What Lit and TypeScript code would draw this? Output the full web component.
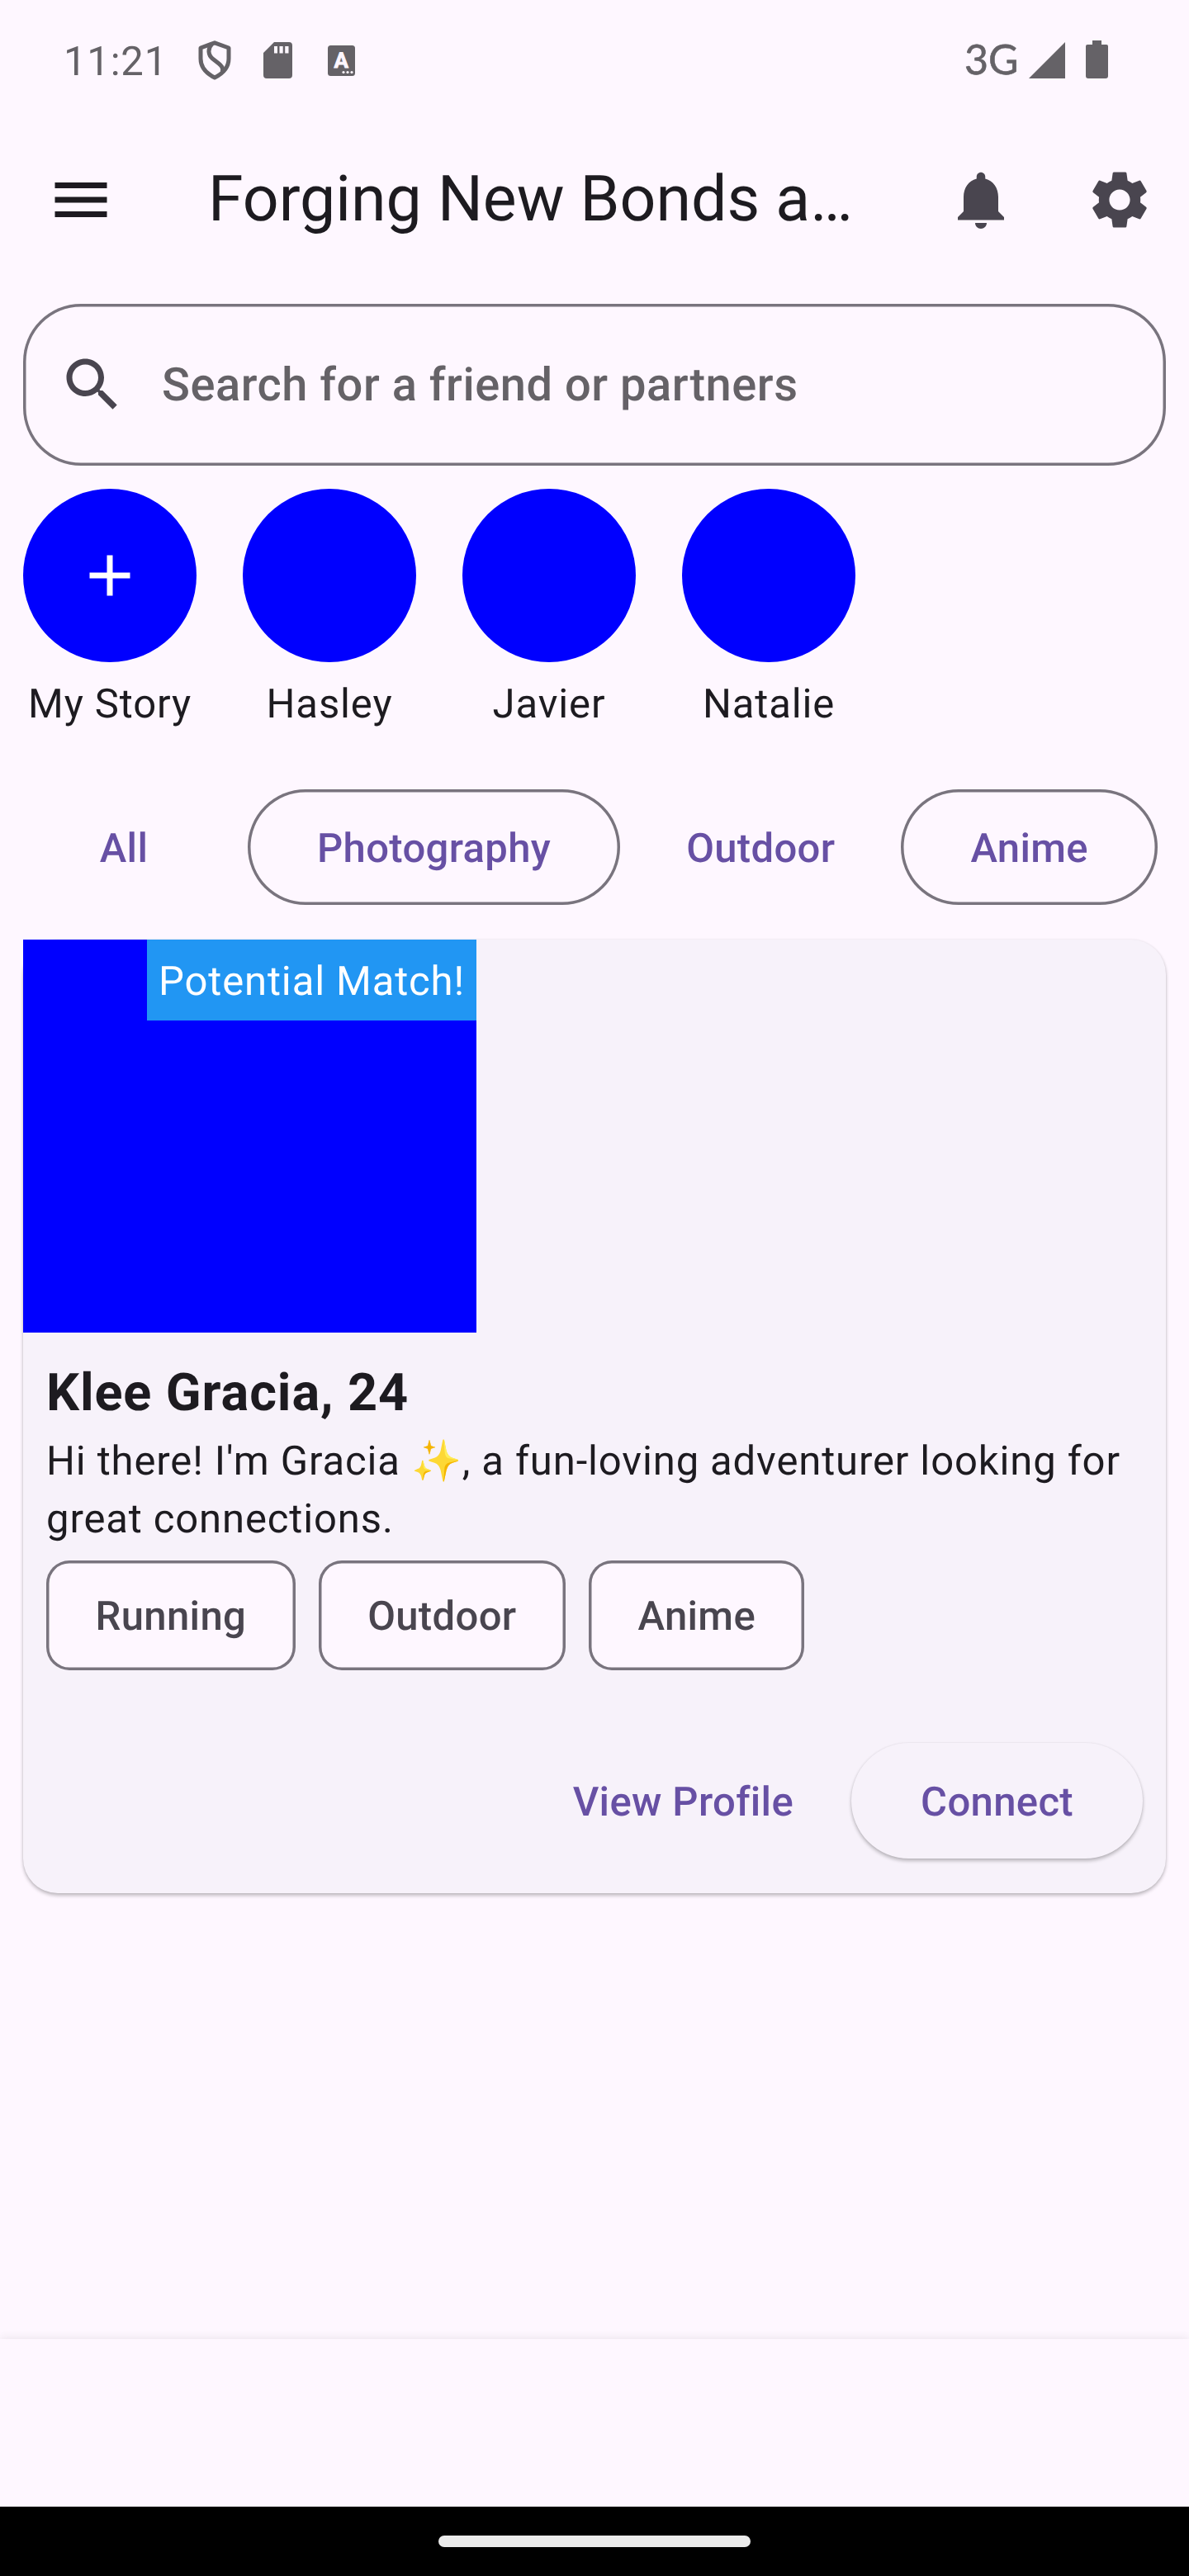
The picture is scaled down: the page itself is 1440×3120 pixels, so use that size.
import { LitElement, html, css, svg } from "lit";
import { customElement } from "lit/decorators.js";

const stories = ["My Story", "Hasley", "Javier", "Natalie"];
const filters = [
  { label: "All", outlined: false },
  { label: "Photography", outlined: true },
  { label: "Outdoor", outlined: false },
  { label: "Anime", outlined: true },
];
const interests = ["Running", "Outdoor", "Anime"];

const menuPath = "M3 18h18v-2H3v2zm0-5h18v-2H3v2zm0-7v2h18V6H3z";
const bellPath =
  "M12 22c1.1 0 2-.9 2-2h-4c0 1.1.89 2 2 2zm6-6v-5c0-3.07-1.64-5.64-4.5-6.32V4c0-.83-.67-1.5-1.5-1.5s-1.5.67-1.5 1.5v.68C7.63 5.36 6 7.92 6 11v5l-2 2v1h16v-1l-2-2z";
const gearPath =
  "M19.14 12.94c.04-.3.06-.61.06-.94 0-.32-.02-.64-.07-.94l2.03-1.58c.18-.14.23-.41.12-.61l-1.92-3.32c-.12-.22-.37-.29-.59-.22l-2.39.96c-.5-.38-1.03-.7-1.62-.94L14.4 2.81c-.04-.24-.24-.41-.48-.41h-3.84c-.24 0-.43.17-.47.41L9.25 5.35c-.59.24-1.13.57-1.62.94L5.24 5.33c-.22-.08-.47 0-.59.22L2.74 8.87c-.12.21-.08.47.12.61l2.03 1.58c-.05.3-.09.63-.09.94s.02.64.07.94l-2.03 1.58c-.18.14-.23.41-.12.61l1.92 3.32c.12.22.37.29.59.22l2.39-.96c.5.38 1.03.7 1.62.94l.36 2.54c.05.24.24.41.48.41h3.84c.24 0 .44-.17.47-.41l.36-2.54c.59-.24 1.13-.56 1.62-.94l2.39.96c.22.08.47 0 .59-.22l1.92-3.32c.12-.22.07-.47-.12-.61l-2.01-1.58zM12 15.6c-1.98 0-3.6-1.62-3.6-3.6s1.62-3.6 3.6-3.6 3.6 1.62 3.6 3.6-1.62 3.6-3.6 3.6z";
const searchPath =
  "M15.5 14h-.79l-.28-.27C15.41 12.59 16 11.11 16 9.5 16 5.91 13.09 3 9.5 3S3 5.91 3 9.5 5.91 16 9.5 16c1.61 0 3.09-.59 4.23-1.57l.27.28v.79l5 4.99L20.49 19l-4.99-5zm-6 0C7.01 14 5 11.99 5 9.5S7.01 5 9.5 5 14 7.01 14 9.5 11.99 14 9.5 14z";
const plusPath = "M19 13h-6v6h-2v-6H5v-2h6V5h2v6h6v2z";

const icon = (d: string) =>
  html`<svg class="icon" viewBox="0 0 24 24" fill="currentColor">${svg`<path d=${d}></path>`}</svg>`;

@customElement("app-root")
export class AppRoot extends LitElement {
  static styles = css`
    :host {
      display: flex;
      flex-direction: column;
      width: 1440px;
      height: 3120px;
      box-sizing: border-box;
      overflow: hidden;
      background: #fef7ff;
      color: #1d1b20;
      font-family: Roboto, "Liberation Sans", sans-serif;
      font-size: 49px;
      line-height: 70px;
      letter-spacing: 0.875px;
      text-rendering: geometricPrecision;
      white-space: nowrap;
    }
    * {
      box-sizing: border-box;
    }
    svg {
      display: block;
      flex: none;
    }
    .icon {
      width: 84px;
      height: 84px;
    }
    .status {
      display: flex;
      align-items: center;
      justify-content: space-between;
      height: 146px;
      padding: 0 98px 0 77px;
      color: #656267;
      letter-spacing: 0;
    }
    .status-group {
      display: flex;
      align-items: center;
    }
    .clock {
      width: 163px;
      margin-top: 3px;
      letter-spacing: 0.8px;
    }
    .shield {
      width: 40px;
      height: 48px;
      margin-right: 39px;
    }
    .sd {
      width: 35px;
      height: 44px;
      margin-right: 43px;
    }
    .lang {
      width: 33px;
      height: 37px;
      font-family: Roboto, sans-serif;
      font-size: 26px;
      font-weight: 700;
    }
    .net {
      width: 78px;
      margin-top: -4px;
      font-family: Lato, Roboto, sans-serif;
      font-size: 50px;
      -webkit-text-stroke: 0.6px currentColor;
    }
    .signal {
      width: 44px;
      height: 44px;
      margin-right: 25px;
    }
    .battery {
      width: 27px;
      height: 46px;
      margin-top: -2px;
    }
    .appbar {
      display: flex;
      align-items: center;
      height: 192px;
      padding: 0 42px 0 56px;
      color: #49454f;
    }
    .menu {
      display: flex;
      color: #1d1b20;
    }
    .title {
      flex: none;
      width: 894px;
      margin: 0 0 0 112px;
      padding: 0 0 3px;
      font-size: 77px;
      font-weight: 400;
      line-height: 98px;
      letter-spacing: 0;
      color: #1d1b20;
    }
    .actions {
      display: flex;
      gap: 84px;
    }
    .search {
      display: flex;
      align-items: center;
      flex: none;
      height: 196px;
      margin: 30px 28px 28px;
      padding: 0 42px;
      border-radius: 70px;
      box-shadow: inset 0 0 0 3.5px #79747e;
      color: #49454f;
    }
    .hint {
      margin-left: 42px;
      padding-bottom: 1px;
      font-size: 56px;
      font-weight: 500;
      letter-spacing: 0.525px;
      color: #656267;
    }
    .stories {
      display: flex;
      gap: 56px;
      padding: 0 28px;
    }
    .story {
      display: flex;
      flex-direction: column;
      align-items: center;
      width: 210px;
      gap: 16px;
    }
    .avatar {
      display: flex;
      align-items: center;
      justify-content: center;
      width: 210px;
      height: 210px;
      border-radius: 50%;
      background: #0000ff;
      color: #ffffff;
    }
    .filters {
      display: flex;
      justify-content: space-evenly;
      padding-top: 68px;
    }
    .button {
      display: flex;
      align-items: center;
      justify-content: center;
      min-width: 224px;
      height: 140px;
      padding: 3px 42px 0;
      border-radius: 70px;
      font-weight: 500;
      letter-spacing: 0.35px;
      color: #6750a4;
    }
    .outlined {
      padding: 3px 84px 0;
      box-shadow: inset 0 0 0 3.5px #79747e;
    }
    .elevated {
      padding: 3px 84px 0;
      background: #f7f2fa;
      box-shadow: 0 3px 4px rgba(0, 0, 0, 0.24), 0 0 3px rgba(0, 0, 0, 0.08);
    }
    .card {
      display: flex;
      flex-direction: column;
      flex: none;
      height: 1155px;
      margin: 42px 28px 0;
      border-radius: 42px;
      background: #f7f2fa;
      box-shadow: 0 3px 4px rgba(0, 0, 0, 0.24), 0 0 3px rgba(0, 0, 0, 0.08);
    }
    .photo {
      display: flex;
      justify-content: flex-end;
      align-items: flex-start;
      width: 549px;
      height: 476px;
      background: #0000ff;
    }
    .badge {
      padding: 16px 14px 12px;
      background: #2196f3;
      color: #ffffff;
    }
    .details {
      padding: 29px 28px 0;
    }
    .name {
      margin: 0;
      font-size: 63px;
      font-weight: 700;
      line-height: 90px;
    }
    .bio {
      margin: 2px 0 0;
    }
    .tags {
      display: flex;
      gap: 28px;
      padding-top: 15px;
    }
    .tag {
      display: flex;
      align-items: center;
      height: 133px;
      padding: 3px 59.5px 0;
      border-radius: 28px;
      background: #fef7ff;
      box-shadow: inset 0 0 0 3.5px #79747e;
      font-weight: 500;
      letter-spacing: 0.35px;
      color: #49454f;
    }
    .card-actions {
      display: flex;
      justify-content: flex-end;
      gap: 28px;
      padding: 88px 28px 0;
    }
    .bottom {
      height: 203px;
      flex: none;
      margin-top: auto;
      background: #fef7ff;
      box-shadow: 0 -2px 10px rgba(0, 0, 0, 0.07);
    }
    .nav {
      display: flex;
      align-items: center;
      justify-content: center;
      flex: none;
      height: 84px;
      background: #000000;
    }
    .handle {
      width: 378px;
      height: 14px;
      border-radius: 7px;
      background: #ebebeb;
    }
  `;

  private statusBar() {
    return html`<div class="status">
      <div class="status-group">
        <span class="clock">11:21</span>
        <svg class="shield" viewBox="0 0 40 48" fill="none" stroke="currentColor" stroke-width="5" stroke-linejoin="round">
          <path d="M20 2.8 L37 9 V22 C37 32 30 40 20 45 C10 40 3 32 3 22 V9 Z"></path>
          <path d="M17 4 C11 10 12 18 18 22.5 L25 28 C30 32 30.5 35 29 38"></path>
        </svg>
        <svg class="sd" viewBox="0 0 35 44" fill="currentColor">
          <path fill-rule="evenodd" d="M13 0H31a4 4 0 0 1 4 4V40a4 4 0 0 1-4 4H4a4 4 0 0 1-4-4V13ZM13 5v8.500h4V5ZM19.500 5v8.500h4.200V5ZM26.200 5v8.500h4.300V5Z"></path>
        </svg>
        <svg class="lang" viewBox="0 0 33 37">
          <rect width="33" height="37" rx="3.500" fill="currentColor"></rect>
          <text x="16.300" y="27" text-anchor="middle" fill="#fef7ff" stroke="#fef7ff" stroke-width="0.800">A</text>
          <circle cx="19" cy="32.500" r="1.600" fill="#fef7ff"></circle>
          <circle cx="24" cy="32.500" r="1.600" fill="#fef7ff"></circle>
          <circle cx="29" cy="32.500" r="1.600" fill="#fef7ff"></circle>
        </svg>
      </div>
      <div class="status-group">
        <span class="net">3G</span>
        <svg class="signal" viewBox="0 0 44 44" fill="currentColor"><path d="M44 0V44H0Z"></path></svg>
        <svg class="battery" viewBox="0 0 27 46" fill="currentColor">
          <path d="M8 0H19V5H25a2 2 0 0 1 2 2V43a3 3 0 0 1-3 3H3a3 3 0 0 1-3-3V7a2 2 0 0 1 2-2H8Z"></path>
        </svg>
      </div>
    </div>`;
  }

  render() {
    return html`
      ${this.statusBar()}
      <header class="appbar">
        <span class="menu">${icon(menuPath)}</span>
        <h1 class="title">Forging New Bonds a…</h1>
        <div class="actions">${icon(bellPath)}${icon(gearPath)}</div>
      </header>
      <div class="search">${icon(searchPath)}<span class="hint">Search for a friend or partners</span></div>
      <div class="stories">
        ${stories.map(
          (name, i) => html`<div class="story">
            <div class="avatar">${i === 0 ? icon(plusPath) : ""}</div>
            <span>${name}</span>
          </div>`
        )}
      </div>
      <div class="filters">
        ${filters.map((f) => html`<span class="button ${f.outlined ? "outlined" : ""}">${f.label}</span>`)}
      </div>
      <section class="card">
        <div class="photo"><span class="badge">Potential Match!</span></div>
        <div class="details">
          <h2 class="name">Klee Gracia, 24</h2>
          <p class="bio">Hi there! I'm Gracia ✨, a fun-loving adventurer looking for<br />great connections.</p>
          <div class="tags">${interests.map((t) => html`<span class="tag">${t}</span>`)}</div>
        </div>
        <div class="card-actions">
          <span class="button">View Profile</span>
          <span class="button elevated">Connect</span>
        </div>
      </section>
      <div class="bottom"></div>
      <div class="nav"><div class="handle"></div></div>
    `;
  }
}
